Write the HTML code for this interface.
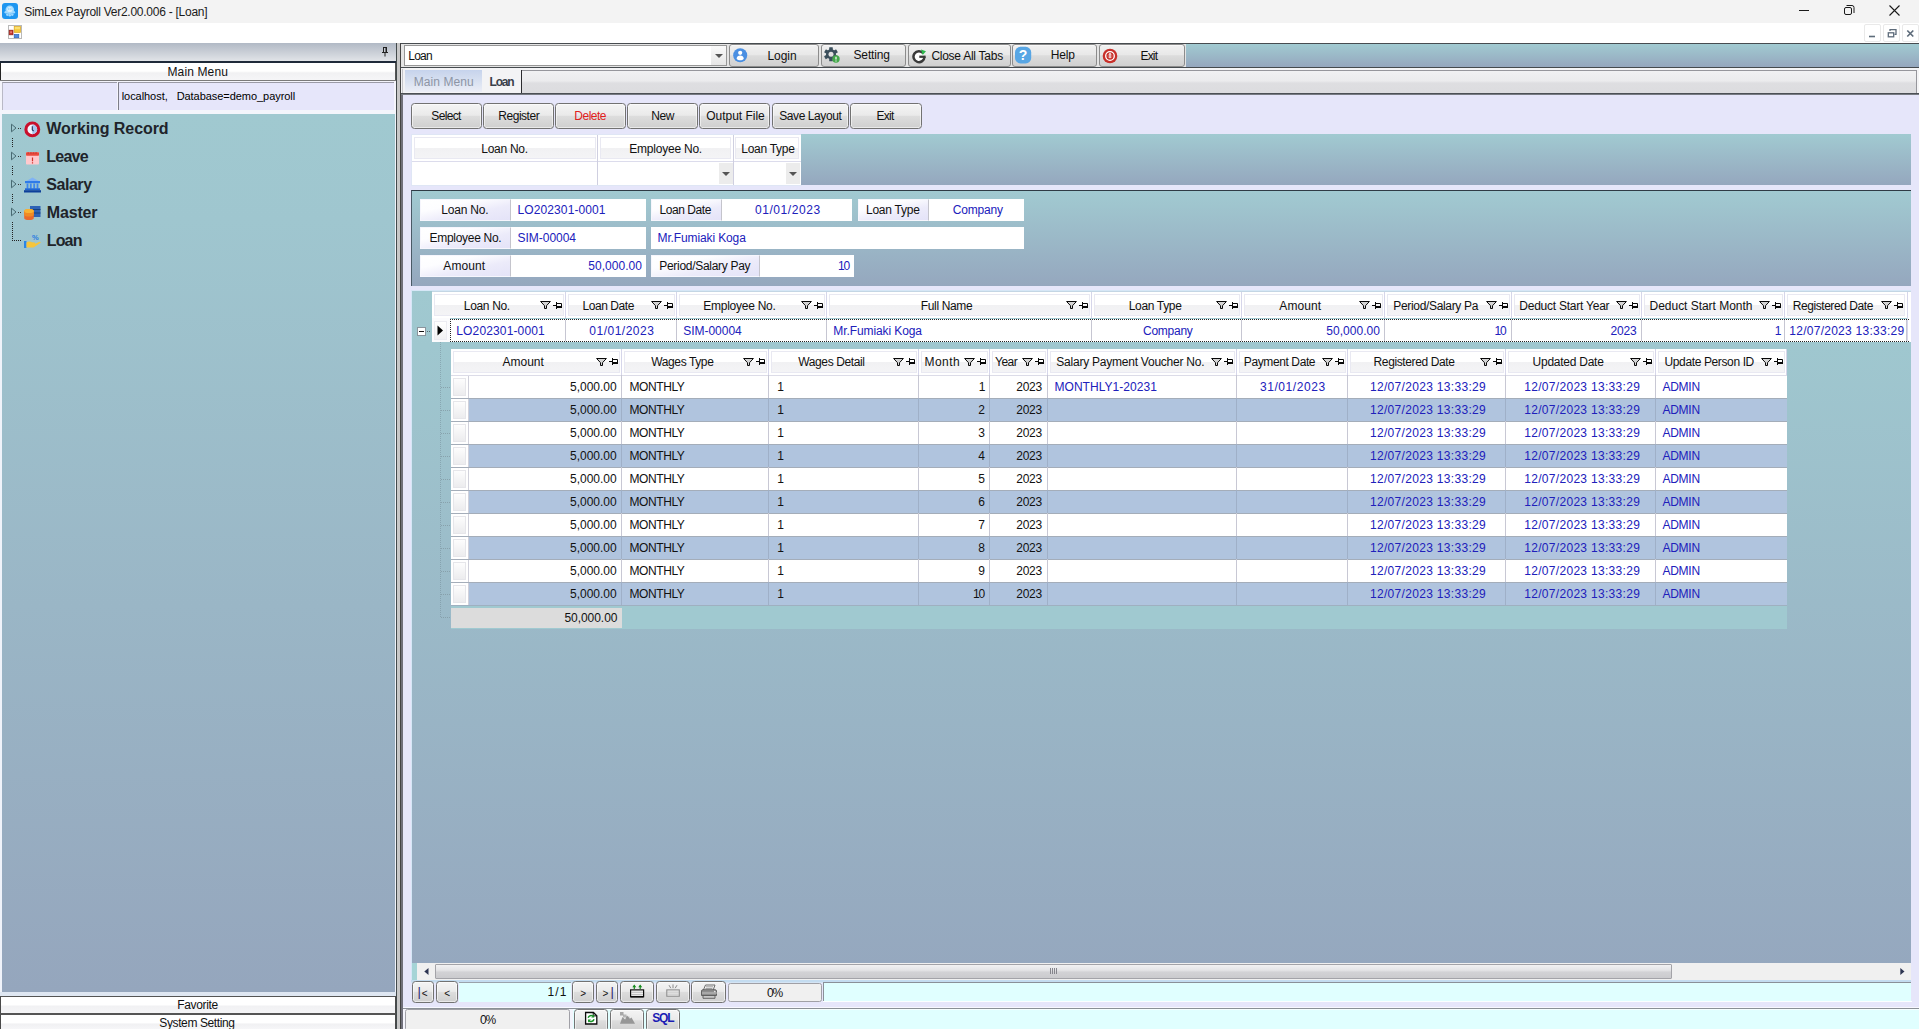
<!DOCTYPE html><html lang="en"><head><meta charset="utf-8"><title>SimLex Payroll Ver2.00.006 - [Loan]</title><style>
*{box-sizing:border-box;margin:0;padding:0}
html,body{width:1919px;height:1029px;overflow:hidden;background:#e6e6fa}
body{position:relative;font-family:"Liberation Sans","DejaVu Sans",sans-serif;font-size:12px;color:#111;line-height:1}
div,span,svg{position:absolute}
.t{white-space:nowrap;font-size:12px;line-height:14px;height:14px}
.c{text-align:center}
.r{text-align:right}
.bl{color:#2020bb}
.grad{background:linear-gradient(#a1cad1,#95a7be)}
.btn{border:1px solid #727272;border-radius:3.500px;background:linear-gradient(#f4f4f4 0%,#eaeaea 47%,#dddddd 51%,#cfcfcf 100%);box-shadow:inset 0 0 0 1px rgba(255,255,255,.55)}
.tbtn{border:1px solid #8c8c8c;border-radius:3px;background:linear-gradient(#f1f1f1 0%,#e8e8e8 47%,#dcdcdc 51%,#d0d0d0 100%);box-shadow:inset 0 1px 0 rgba(255,255,255,.5)}
.btn .t{left:0;right:0;text-align:center}
.hd{background:#fff}
.hd i{position:absolute;left:2px;right:2px;top:2px;bottom:2px;border:1px solid #e9e9f2;background:linear-gradient(#ffffff 0%,#ffffff 50%,#f1f1f3 52%,#f4f4f6 100%)}
.lab{background:linear-gradient(168deg,#ffffff 0%,#fdfdff 30%,#ecebfa 62%,#e4e3f8 100%);border:1px solid #f6f6fd;border-right:1px solid #c4c4cc}
.val{background:#fff}
.cell{background:#fff;border-right:1px solid #c9c9d6}
</style></head><body>
<div style="left:0px;top:0px;width:1919px;height:22.5px;background:#f3f3f3"></div>
<svg style="left:2px;top:3px" width="16" height="16" viewBox="0 0 16 16"><rect x="0" y="0" width="16" height="16" rx="3" fill="#1e96f0"/><g fill="#9fd9ff"><circle cx="7.800" cy="6.800" r="4.300"/><circle cx="3.800" cy="9.300" r="1.300"/><circle cx="11.800" cy="9.300" r="1.300"/><circle cx="5.300" cy="11.600" r="1.300"/><circle cx="7.800" cy="12.200" r="1.300"/><circle cx="10.300" cy="11.600" r="1.300"/></g><circle cx="7.800" cy="6.500" r="2.600" fill="#d4efff"/><circle cx="6.800" cy="6" r=".7" fill="#6cc0f8"/><circle cx="8.900" cy="6" r=".7" fill="#6cc0f8"/></svg>
<div class="t " style="left:24.20px;top:5px;letter-spacing:-0.256px;color:#1b1b1b">SimLex Payroll Ver2.00.006 - [Loan]</div>
<svg style="left:1790px;top:0" width="129" height="23" viewBox="0 0 129 23"><path d="M9 10.5h10" stroke="#1a1a1a" stroke-width="1"/><rect x="54.5" y="7.5" width="7" height="7" rx="1.5" fill="none" stroke="#1a1a1a"/><path d="M56.5 5.5h5.5a2 2 0 0 1 2 2v5.500" fill="none" stroke="#1a1a1a"/><path d="M99.500 5.500l10 10M109.500 5.500l-10 10" stroke="#1a1a1a" stroke-width="1.100"/></svg>
<div style="left:0px;top:23px;width:1919px;height:20px;background:#fff"></div>
<svg style="left:8px;top:25px" width="14" height="14" viewBox="0 0 14 14"><rect x=".5" y=".5" width="13" height="13" fill="#fff" stroke="#b9b9b9"/><rect x="6.200" y="1.600" width="6.200" height="5.800" fill="#f6c83a"/><rect x="6.200" y="1.600" width="6.200" height="2.600" fill="#fbe070"/><rect x="6.200" y="1.600" width="6.200" height="5.800" fill="none" stroke="#d9a520" stroke-width=".7"/><rect x="1.200" y="5.200" width="3.800" height="4.600" fill="#c8342c" stroke="#8e1f18" stroke-width=".7"/><rect x="2.300" y="6.300" width="1.500" height="1.800" fill="#ee8a80"/><rect x="6.200" y="9.500" width="4.600" height="3.200" fill="#4f8ae0" stroke="#2f64b8" stroke-width=".7"/></svg>
<div style="left:1864px;top:24px;width:17px;height:18px;background:#fff;border:1px solid #e9e9e9;border-radius:2px"></div>
<div style="left:1883px;top:24px;width:17px;height:18px;background:#fff;border:1px solid #e9e9e9;border-radius:2px"></div>
<div style="left:1902px;top:24px;width:17px;height:18px;background:#fff;border:1px solid #e9e9e9;border-radius:2px"></div>
<svg style="left:1864px;top:25px" width="55" height="17" viewBox="0 0 55 17"><path d="M5 11.500h6" stroke="#5d6b7a" stroke-width="1.6"/><rect x="24.300" y="7.800" width="5.400" height="4" fill="none" stroke="#5d6b7a" stroke-width="1.300"/><path d="M26 6V4.700h6v4.600h-1.500" fill="none" stroke="#5d6b7a" stroke-width="1.300"/><path d="M43.300 5.500l6 6M49.300 5.500l-6 6" stroke="#5d6b7a" stroke-width="1.700"/></svg>
<div style="left:0px;top:43px;width:396px;height:18px;background:linear-gradient(#b1b9c5,#c9ced6 50%,#e1e4e8)"></div>
<div style="left:0px;top:61px;width:396px;height:2px;background:#1f2a3a"></div>
<svg style="left:380px;top:46px" width="10" height="12" viewBox="0 0 10 12"><path d="M3 1.500h4M3.500 1.500v4.500M6.500 1.500v4.500M6 1.500v4.500M2 6.500h6M5 6.500v4" stroke="#222" stroke-width="1" fill="none"/></svg>
<div style="left:0px;top:63px;width:396px;height:18px;background:linear-gradient(#fff 0%,#fff 45%,#f1f1f3 55%,#f6f6f8 100%);border-left:1px solid #222;border-right:1px solid #555"></div>
<div style="left:0px;top:80px;width:396px;height:1px;background:#7a7a7a"></div>
<div class="t " style="left:167.50px;top:65px;letter-spacing:0.125px;">Main Menu</div>
<div style="left:0px;top:81px;width:396px;height:33px;background:#f4f4fb"></div>
<div style="left:2px;top:82px;width:115px;height:29px;background:#e6e6fa;border-top:1px solid #9a9aa6;border-left:1px solid #b9b9c6"></div>
<div style="left:118px;top:82px;width:276px;height:29px;background:#e6e6fa;border-top:1px solid #9a9aa6;border-left:1px solid #7d7d88"></div>
<div class="t " style="left:121.70px;top:89px;letter-spacing:-0.052px;font-size:11px;white-space:pre;color:#000">localhost,   Database=demo_payroll</div>
<div style="left:0px;top:110px;width:396px;height:4px;background:#f3f5fb"></div>
<div style="left:2px;top:114px;width:393px;height:878px;background:linear-gradient(#a0c9d0 0%,#9fc6cf 12%,#95a6bd 100%)"></div>
<div style="left:0px;top:114px;width:2px;height:878px;background:#f0f3fa"></div>
<div style="left:395px;top:114px;width:1px;height:878px;background:#f0f3fa"></div>
<div style="left:0px;top:992px;width:396px;height:4px;background:#dfe7f2"></div>
<div class="t " style="left:46.30px;top:119px;letter-spacing:-0.077px;font-size:16px;font-weight:bold;line-height:20px;height:20px;color:#20242a">Working Record</div>
<div class="t " style="left:46.30px;top:147px;letter-spacing:-0.775px;font-size:16px;font-weight:bold;line-height:20px;height:20px;color:#20242a">Leave</div>
<div class="t " style="left:46.30px;top:175px;letter-spacing:-0.460px;font-size:16px;font-weight:bold;line-height:20px;height:20px;color:#20242a">Salary</div>
<div class="t " style="left:46.70px;top:203px;letter-spacing:-0.140px;font-size:16px;font-weight:bold;line-height:20px;height:20px;color:#20242a">Master</div>
<div class="t " style="left:46.70px;top:231px;letter-spacing:-0.833px;font-size:16px;font-weight:bold;line-height:20px;height:20px;color:#20242a">Loan</div>
<svg style="left:10px;top:123px" width="12" height="10" viewBox="0 0 12 10"><path d="M1.500 1.200L6 5 1.500 8.800z" fill="none" stroke="#486a72" stroke-width="1"/><path d="M8 5.500h3" stroke="#333" stroke-width="1" stroke-dasharray="1 1"/></svg>
<svg style="left:10px;top:151px" width="12" height="10" viewBox="0 0 12 10"><path d="M1.500 1.200L6 5 1.500 8.800z" fill="none" stroke="#486a72" stroke-width="1"/><path d="M8 5.500h3" stroke="#333" stroke-width="1" stroke-dasharray="1 1"/></svg>
<svg style="left:10px;top:179px" width="12" height="10" viewBox="0 0 12 10"><path d="M1.500 1.200L6 5 1.500 8.800z" fill="none" stroke="#486a72" stroke-width="1"/><path d="M8 5.500h3" stroke="#333" stroke-width="1" stroke-dasharray="1 1"/></svg>
<svg style="left:10px;top:207px" width="12" height="10" viewBox="0 0 12 10"><path d="M1.500 1.200L6 5 1.500 8.800z" fill="none" stroke="#486a72" stroke-width="1"/><path d="M8 5.500h3" stroke="#333" stroke-width="1" stroke-dasharray="1 1"/></svg>
<div style="left:12px;top:138px;width:1px;height:9px;background:repeating-linear-gradient(#222 0 1px,transparent 1px 2px)"></div>
<div style="left:12px;top:166px;width:1px;height:9px;background:repeating-linear-gradient(#222 0 1px,transparent 1px 2px)"></div>
<div style="left:12px;top:194px;width:1px;height:9px;background:repeating-linear-gradient(#222 0 1px,transparent 1px 2px)"></div>
<div style="left:12px;top:222px;width:1px;height:19px;background:repeating-linear-gradient(#222 0 1px,transparent 1px 2px)"></div>
<div style="left:12px;top:240px;width:10px;height:1px;background:repeating-linear-gradient(90deg,#222 0 1px,transparent 1px 2px)"></div>
<svg style="left:24px;top:120.500px" width="17" height="17" viewBox="0 0 17 17"><circle cx="8.300" cy="8.400" r="6.400" fill="#f4f6ff" stroke="#c90f2c" stroke-width="3.100"/><path d="M8.300 3.500a4.900 4.900 0 0 1 0 9.800z" fill="#a9c6ee"/><path d="M8.300 5.200v3.600l1.300 1.200" stroke="#1f2f5a" stroke-width="1.100" fill="none"/></svg>
<svg style="left:26px;top:151.500px" width="13" height="13" viewBox="0 0 13 13"><rect x="0" y=".3" width="13" height="12.200" rx=".8" fill="#ffc9cd"/><rect x="0" y=".3" width="13" height="3.400" rx=".8" fill="#e94a3d"/><path d="M1.500 1h10" stroke="#c0352c" stroke-width="1" stroke-dasharray="1.600 1"/><path d="M6.500 5.600v3.600M6.500 10.200v1.200" stroke="#d2302b" stroke-width="1.200"/></svg>
<svg style="left:24px;top:177px" width="17" height="16" viewBox="0 0 17 16"><path d="M8.500 .5L15.500 4.500H1.500z" fill="#7fb2f5"/><rect x="1" y="4" width="15" height="2.200" fill="#2f7be8"/><path d="M3.500 6.500v5M6.800 6.500v5M10.200 6.500v5M13.500 6.500v5" stroke="#3b86ee" stroke-width="1.800"/><rect x="1" y="11.300" width="15" height="1.800" fill="#1d66d6"/><rect x="0" y="13.200" width="17" height="2.300" fill="#0d3f9a"/></svg>
<svg style="left:24px;top:205px" width="17" height="16" viewBox="0 0 17 16"><rect x="6" y="1" width="10.500" height="11" fill="#2e62b5"/><path d="M6 4.500h10.500M6 8h10.500" stroke="#16407f" stroke-width="1.200"/><ellipse cx="5" cy="6" rx="4.800" ry="2" fill="#f6a623"/><path d="M.2 6v7a4.800 2 0 0 0 9.600 0V6z" fill="#e9692c"/><path d="M.2 6v3.500a4.800 2 0 0 0 9.600 0V6z" fill="#f08a24"/><ellipse cx="5" cy="6" rx="4.800" ry="2" fill="#f8b133"/></svg>
<svg style="left:24px;top:233px" width="17" height="16" viewBox="0 0 17 16"><rect x="0" y="8" width="2.500" height="7" fill="#2a86e8"/><path d="M2.500 9.500c2-1.500 4-1.200 5.500-.3l2.500.3c1 .2 1 1.500 0 1.600l5-2.400c1-.3 1.600.7.800 1.400L9.500 14.500H2.500z" fill="#f7c53b"/><text x="8" y="6.500" font-family="Liberation Sans,sans-serif" font-size="7.500" font-weight="bold" fill="#2a7be0">%</text></svg>
<div style="left:0px;top:996px;width:396px;height:18px;background:linear-gradient(#fff 0%,#fff 45%,#f1f1f3 55%,#f6f6f8 100%);border:1px solid #4a4a4a;border-bottom:none;border-top:1px solid #555"></div>
<div class="t " style="left:177.30px;top:998px;letter-spacing:-0.343px;">Favorite</div>
<div style="left:0px;top:1013px;width:396px;height:16px;background:linear-gradient(#fff 0%,#fff 55%,#f1f1f3 65%,#f6f6f8 100%);border:1px solid #4a4a4a;border-top:2px solid #555;border-bottom:none"></div>
<div class="t " style="left:159.30px;top:1016px;letter-spacing:-0.385px;">System Setting</div>
<div style="left:396px;top:43px;width:1px;height:986px;background:#434a4b"></div>
<div style="left:397px;top:43px;width:3px;height:986px;background:#c8c8c8"></div>
<div style="left:400px;top:43px;width:1px;height:986px;background:#444"></div>
<div style="left:401px;top:43px;width:1518px;height:1px;background:#474c50"></div>
<div class="grad" style="left:401px;top:44px;width:1518px;height:23px;"></div>
<div style="left:401px;top:67px;width:1518px;height:1px;background:#454a4e"></div>
<div style="left:401px;top:44px;width:785px;height:23px;background:#e4e4e4"></div>
<div style="left:404px;top:45px;width:323px;height:21px;background:#fff;border:1px solid #979797"></div>
<div class="t " style="left:408.30px;top:49px;letter-spacing:-0.767px;">Loan</div>
<div style="left:711px;top:46px;width:15px;height:19px;background:linear-gradient(#fafafa,#e6e6e6)"></div>
<svg style="left:715px;top:54px" width="8" height="4" viewBox="0 0 8 4"><path d="M0 0h8L4 4z" fill="#555"/></svg>
<div class="tbtn" style="left:728.5px;top:44px;width:90.5px;height:23px;"></div>
<div class="t " style="left:767.50px;top:49px;letter-spacing:-0.050px;">Login</div>
<div class="tbtn" style="left:821px;top:44px;width:85px;height:23px;"></div>
<div class="t " style="left:853.50px;top:48px;letter-spacing:-0.150px;">Setting</div>
<div class="tbtn" style="left:907.5px;top:44px;width:103.5px;height:23px;"></div>
<div class="t " style="left:931.40px;top:49px;letter-spacing:-0.262px;">Close All Tabs</div>
<div class="tbtn" style="left:1012px;top:44px;width:85px;height:23px;"></div>
<div class="t " style="left:1050.80px;top:48px;letter-spacing:-0.200px;">Help</div>
<div class="tbtn" style="left:1098.5px;top:44px;width:86px;height:23px;"></div>
<div class="t " style="left:1140.40px;top:49px;letter-spacing:-0.767px;">Exit</div>
<svg style="left:733px;top:48px" width="15" height="15" viewBox="0 0 15 15"><circle cx="7.200" cy="7.200" r="7" fill="#4a8fe2"/><circle cx="7.200" cy="4.800" r="2.100" fill="#fff"/><path d="M3.600 10.800c.2-2.600 1.700-3.400 3.600-3.400s3.400.8 3.600 3.400c-.8 1-2.200 1.500-3.600 1.500s-2.800-.5-3.600-1.500z" fill="#fff"/></svg>
<svg style="left:824px;top:47px" width="16" height="16" viewBox="0 0 16 16"><g fill="#3b4f5c"><circle cx="7" cy="7.300" r="5"/><rect x="5.200" y="0.300" width="3.600" height="4" rx=".5" transform="rotate(0 7 7.300)"/><rect x="5.200" y="0.300" width="3.600" height="4" rx=".5" transform="rotate(60 7 7.300)"/><rect x="5.200" y="0.300" width="3.600" height="4" rx=".5" transform="rotate(120 7 7.300)"/><rect x="5.200" y="0.300" width="3.600" height="4" rx=".5" transform="rotate(180 7 7.300)"/><rect x="5.200" y="0.300" width="3.600" height="4" rx=".5" transform="rotate(240 7 7.300)"/><rect x="5.200" y="0.300" width="3.600" height="4" rx=".5" transform="rotate(300 7 7.300)"/></g><circle cx="7" cy="7.300" r="2.500" fill="#e0e0e0"/><circle cx="12" cy="12" r="3.700" fill="#43a84a"/><path d="M12 9.800v2.700M12 13.500v.9" stroke="#fff" stroke-width="1.200"/></svg>
<svg style="left:912px;top:48.500px" width="15" height="15" viewBox="0 0 15 15"><circle cx="7" cy="7.600" r="4.800" fill="#fff"/><path d="M11.300 4.200A5.500 5.500 0 1 0 12.500 7.800" fill="none" stroke="#3a3a3a" stroke-width="2.500"/><path d="M7.300 6.600h6.300v2.300H7.300z" fill="#3a3a3a"/><path d="M9 .6l5 1.700-3.300 3.700z" fill="#2cb84c"/></svg>
<svg style="left:1014px;top:46px" width="18" height="18" viewBox="0 0 18 18"><rect x="1" y=".8" width="16.200" height="16.600" rx="5.500" fill="#58a6e4"/><text x="9" y="14" text-anchor="middle" font-family="Liberation Sans,sans-serif" font-size="14" font-weight="bold" fill="#fff">?</text></svg>
<svg style="left:1102px;top:48px" width="16" height="16" viewBox="0 0 16 16"><circle cx="8" cy="8" r="7.300" fill="#c8302a"/><circle cx="8" cy="8" r="4.300" fill="none" stroke="#fff" stroke-width="1.300"/><path d="M8 5v5" stroke="#fff" stroke-width="1.300"/><circle cx="8" cy="8" r="2" fill="none" stroke="#fff" stroke-width=".6" opacity=".5"/></svg>
<div style="left:401px;top:68px;width:1518px;height:25px;background:#f4f4f6"></div>
<div style="left:522px;top:70px;width:1395px;height:23px;background:linear-gradient(#f1f1f3 0%,#ebebed 45%,#dedee1 55%,#dcdcdf 100%);border:1px solid #96969c;border-left:none;border-bottom:none"></div>
<div style="left:401px;top:93px;width:1518px;height:1px;background:#4c5055"></div>
<div style="left:401px;top:94px;width:1518px;height:1px;background:#777b82"></div>
<div style="left:401px;top:68px;width:4px;height:25px;background:#f1f1f4"></div>
<div style="left:402px;top:69px;width:1px;height:24px;background:#c4c4c8"></div>
<div style="left:405px;top:70px;width:77px;height:22px;background:linear-gradient(#c6d3ec 0%,#d6dff0 45%,#eceef6 100%)"></div>
<div class="t " style="left:413.80px;top:75px;letter-spacing:0.062px;color:#8d95a5">Main Menu</div>
<div style="left:482px;top:70px;width:40px;height:23px;background:#f3f3f5;border-right:1px solid #2c2c30"></div>
<div class="t " style="left:489.50px;top:75px;letter-spacing:-1.167px;font-weight:bold;color:#3a404a">Loan</div>
<div style="left:401px;top:95px;width:1518px;height:886px;background:#e6e6fa"></div>
<div style="left:401px;top:95px;width:2px;height:934px;background:#70707a"></div>
<div class="btn" style="left:411.2px;top:103.2px;width:71px;height:25.6px;"></div>
<div class="t " style="left:431.30px;top:109px;letter-spacing:-0.660px;">Select</div>
<div class="btn" style="left:483.3px;top:103.2px;width:71px;height:25.6px;"></div>
<div class="t " style="left:498.30px;top:109px;letter-spacing:-0.471px;">Register</div>
<div class="btn" style="left:555.3px;top:103.2px;width:71px;height:25.6px;"></div>
<div class="t " style="left:574.30px;top:109px;letter-spacing:-0.500px;color:#e0201c">Delete</div>
<div class="btn" style="left:627.3px;top:103.2px;width:71px;height:25.6px;"></div>
<div class="t " style="left:651.30px;top:109px;letter-spacing:-0.400px;">New</div>
<div class="btn" style="left:699.3px;top:103.2px;width:71.2px;height:25.6px;"></div>
<div class="t " style="left:706.30px;top:109px;letter-spacing:-0.030px;">Output File</div>
<div class="btn" style="left:771.5px;top:103.2px;width:77.5px;height:25.6px;"></div>
<div class="t " style="left:779.30px;top:109px;letter-spacing:-0.430px;">Save Layout</div>
<div class="btn" style="left:850px;top:103.2px;width:71.5px;height:25.6px;"></div>
<div class="t " style="left:876.50px;top:109px;letter-spacing:-0.733px;">Exit</div>
<div style="left:411px;top:134px;width:391px;height:52px;background:#fff;border:1px solid #dfe6f5"></div>
<div class="grad" style="left:801px;top:134px;width:1110px;height:51px;"></div>
<div class="hd" style="left:412px;top:135px;width:186px;height:26px;"><i></i></div>
<div class="t " style="left:481.30px;top:142px;letter-spacing:-0.286px;">Loan No.</div>
<div class="hd" style="left:598px;top:135px;width:135px;height:26px;"><i></i></div>
<div class="t " style="left:629.30px;top:142px;letter-spacing:-0.227px;">Employee No.</div>
<div class="hd" style="left:733px;top:135px;width:68px;height:26px;"><i></i></div>
<div class="t " style="left:741.30px;top:142px;letter-spacing:-0.287px;">Loan Type</div>
<div style="left:412px;top:161px;width:389px;height:1px;background:#dcdcec"></div>
<div style="left:597px;top:135px;width:1px;height:50px;background:#cfcfe0"></div>
<div style="left:733px;top:135px;width:1px;height:50px;background:#cfcfe0"></div>
<div style="left:719px;top:163px;width:14px;height:21px;background:#ececec"></div>
<svg style="left:722px;top:172px" width="8" height="4" viewBox="0 0 8 4"><path d="M0 0h8L4 4z" fill="#555"/></svg>
<div style="left:786px;top:163px;width:14px;height:21px;background:#ececec"></div>
<svg style="left:789px;top:172px" width="8" height="4" viewBox="0 0 8 4"><path d="M0 0h8L4 4z" fill="#555"/></svg>
<div class="grad" style="left:411px;top:190px;width:1500px;height:96px;border-top:1px solid #2f3b45;border-left:1px solid #4a5a66"></div>
<div class="lab" style="left:419.5px;top:199px;width:91px;height:22px;"></div>
<div class="t " style="left:441.30px;top:203px;letter-spacing:-0.214px;">Loan No.</div>
<div class="val" style="left:510.5px;top:199px;width:135.5px;height:22px;"></div>
<div class="t bl" style="left:517.50px;top:203px;letter-spacing:0.108px;">LO202301-0001</div>
<div class="lab" style="left:651px;top:199px;width:70.5px;height:22px;"></div>
<div class="t " style="left:659.50px;top:203px;letter-spacing:-0.438px;">Loan Date</div>
<div class="val" style="left:721.5px;top:199px;width:130.5px;height:22px;"></div>
<div class="t bl" style="left:755.00px;top:203px;letter-spacing:0.556px;">01/01/2023</div>
<div class="lab" style="left:857.5px;top:199px;width:71px;height:22px;"></div>
<div class="t " style="left:866.00px;top:203px;letter-spacing:-0.250px;">Loan Type</div>
<div class="val" style="left:928.5px;top:199px;width:95.5px;height:22px;"></div>
<div class="t bl" style="left:952.70px;top:203px;letter-spacing:-0.167px;">Company</div>
<div class="lab" style="left:419.5px;top:227px;width:91px;height:22px;"></div>
<div class="t " style="left:429.50px;top:231px;letter-spacing:-0.291px;">Employee No.</div>
<div class="val" style="left:510.5px;top:227px;width:135.5px;height:22px;"></div>
<div class="t bl" style="left:517.50px;top:231px;letter-spacing:-0.025px;">SIM-00004</div>
<div class="val" style="left:651px;top:227px;width:373px;height:22px;"></div>
<div class="t bl" style="left:657.50px;top:231px;letter-spacing:-0.121px;">Mr.Fumiaki Koga</div>
<div class="lab" style="left:419.5px;top:255px;width:91px;height:22px;"></div>
<div class="t " style="left:443.30px;top:259px;letter-spacing:0.100px;">Amount</div>
<div class="val" style="left:510.5px;top:255px;width:135.5px;height:22px;"></div>
<div class="t bl" style="left:588.30px;top:259px;letter-spacing:0.025px;">50,000.00</div>
<div class="lab" style="left:651px;top:255px;width:108.5px;height:22px;"></div>
<div class="t " style="left:659.30px;top:259px;letter-spacing:-0.300px;">Period/Salary Pay</div>
<div class="val" style="left:759.5px;top:255px;width:94.5px;height:22px;"></div>
<div class="t bl" style="left:838.00px;top:259px;letter-spacing:-1.200px;">10</div>
<div style="left:411px;top:290px;width:1500px;height:691px;background:#d6e7f6"></div>
<div style="left:412px;top:291px;width:1499px;height:690px;background:linear-gradient(#a0c9d0 0%,#9fc7cf 8%,#95a7be 100%)"></div>
<div style="left:432px;top:291px;width:1479px;height:1px;background:#c4d6e4"></div>
<div style="left:432px;top:292px;width:1479px;height:26px;background:#fff"></div>
<div class="hd" style="left:432px;top:292px;width:134px;height:26px;"><i></i></div>
<div class="t " style="left:463.80px;top:299px;letter-spacing:-0.329px;">Loan No.</div>
<svg style="left:539px;top:301px" width="24" height="10" viewBox="0 0 24 10"><path d="M1.600 .5H11.400L7.500 4.700V7.500H5.500V4.700z" fill="#d4d4d4" stroke="#080808" stroke-width="1" stroke-linejoin="miter"/><path d="M14 4.5h3.500" stroke="#080808" stroke-width="1" fill="none"/><path d="M17.500 1v7" stroke="#080808" stroke-width="1" fill="none"/><path d="M18 2.5h4.500v3.500" stroke="#080808" stroke-width="1" fill="none"/><path d="M18 6h5" stroke="#080808" stroke-width="2" fill="none"/></svg>
<div class="hd" style="left:566px;top:292px;width:111px;height:26px;"><i></i></div>
<div class="t " style="left:582.50px;top:299px;letter-spacing:-0.438px;">Loan Date</div>
<svg style="left:650px;top:301px" width="24" height="10" viewBox="0 0 24 10"><path d="M1.600 .5H11.400L7.500 4.700V7.500H5.500V4.700z" fill="#d4d4d4" stroke="#080808" stroke-width="1" stroke-linejoin="miter"/><path d="M14 4.5h3.500" stroke="#080808" stroke-width="1" fill="none"/><path d="M17.500 1v7" stroke="#080808" stroke-width="1" fill="none"/><path d="M18 2.5h4.500v3.500" stroke="#080808" stroke-width="1" fill="none"/><path d="M18 6h5" stroke="#080808" stroke-width="2" fill="none"/></svg>
<div class="hd" style="left:677px;top:292px;width:150px;height:26px;"><i></i></div>
<div class="t " style="left:703.30px;top:299px;letter-spacing:-0.255px;">Employee No.</div>
<svg style="left:800px;top:301px" width="24" height="10" viewBox="0 0 24 10"><path d="M1.600 .5H11.400L7.500 4.700V7.500H5.500V4.700z" fill="#d4d4d4" stroke="#080808" stroke-width="1" stroke-linejoin="miter"/><path d="M14 4.5h3.500" stroke="#080808" stroke-width="1" fill="none"/><path d="M17.500 1v7" stroke="#080808" stroke-width="1" fill="none"/><path d="M18 2.5h4.500v3.500" stroke="#080808" stroke-width="1" fill="none"/><path d="M18 6h5" stroke="#080808" stroke-width="2" fill="none"/></svg>
<div class="hd" style="left:827px;top:292px;width:265px;height:26px;"><i></i></div>
<div class="t " style="left:920.80px;top:299px;letter-spacing:-0.350px;">Full Name</div>
<svg style="left:1065px;top:301px" width="24" height="10" viewBox="0 0 24 10"><path d="M1.600 .5H11.400L7.500 4.700V7.500H5.500V4.700z" fill="#d4d4d4" stroke="#080808" stroke-width="1" stroke-linejoin="miter"/><path d="M14 4.5h3.500" stroke="#080808" stroke-width="1" fill="none"/><path d="M17.500 1v7" stroke="#080808" stroke-width="1" fill="none"/><path d="M18 2.5h4.500v3.500" stroke="#080808" stroke-width="1" fill="none"/><path d="M18 6h5" stroke="#080808" stroke-width="2" fill="none"/></svg>
<div class="hd" style="left:1092px;top:292px;width:150px;height:26px;"><i></i></div>
<div class="t " style="left:1128.80px;top:299px;letter-spacing:-0.350px;">Loan Type</div>
<svg style="left:1215px;top:301px" width="24" height="10" viewBox="0 0 24 10"><path d="M1.600 .5H11.400L7.500 4.700V7.500H5.500V4.700z" fill="#d4d4d4" stroke="#080808" stroke-width="1" stroke-linejoin="miter"/><path d="M14 4.5h3.500" stroke="#080808" stroke-width="1" fill="none"/><path d="M17.500 1v7" stroke="#080808" stroke-width="1" fill="none"/><path d="M18 2.5h4.500v3.500" stroke="#080808" stroke-width="1" fill="none"/><path d="M18 6h5" stroke="#080808" stroke-width="2" fill="none"/></svg>
<div class="hd" style="left:1242px;top:292px;width:143px;height:26px;"><i></i></div>
<div class="t " style="left:1279.30px;top:299px;letter-spacing:0.100px;">Amount</div>
<svg style="left:1358px;top:301px" width="24" height="10" viewBox="0 0 24 10"><path d="M1.600 .5H11.400L7.500 4.700V7.500H5.500V4.700z" fill="#d4d4d4" stroke="#080808" stroke-width="1" stroke-linejoin="miter"/><path d="M14 4.5h3.500" stroke="#080808" stroke-width="1" fill="none"/><path d="M17.500 1v7" stroke="#080808" stroke-width="1" fill="none"/><path d="M18 2.5h4.500v3.500" stroke="#080808" stroke-width="1" fill="none"/><path d="M18 6h5" stroke="#080808" stroke-width="2" fill="none"/></svg>
<div class="hd" style="left:1385px;top:292px;width:127px;height:26px;"><i></i></div>
<div class="t " style="left:1393.30px;top:299px;letter-spacing:-0.333px;">Period/Salary Pa</div>
<svg style="left:1485px;top:301px" width="24" height="10" viewBox="0 0 24 10"><path d="M1.600 .5H11.400L7.500 4.700V7.500H5.500V4.700z" fill="#d4d4d4" stroke="#080808" stroke-width="1" stroke-linejoin="miter"/><path d="M14 4.5h3.500" stroke="#080808" stroke-width="1" fill="none"/><path d="M17.500 1v7" stroke="#080808" stroke-width="1" fill="none"/><path d="M18 2.5h4.500v3.500" stroke="#080808" stroke-width="1" fill="none"/><path d="M18 6h5" stroke="#080808" stroke-width="2" fill="none"/></svg>
<div class="hd" style="left:1512px;top:292px;width:130px;height:26px;"><i></i></div>
<div class="t " style="left:1519.30px;top:299px;letter-spacing:-0.237px;">Deduct Start Year</div>
<svg style="left:1615px;top:301px" width="24" height="10" viewBox="0 0 24 10"><path d="M1.600 .5H11.400L7.500 4.700V7.500H5.500V4.700z" fill="#d4d4d4" stroke="#080808" stroke-width="1" stroke-linejoin="miter"/><path d="M14 4.5h3.500" stroke="#080808" stroke-width="1" fill="none"/><path d="M17.500 1v7" stroke="#080808" stroke-width="1" fill="none"/><path d="M18 2.5h4.500v3.500" stroke="#080808" stroke-width="1" fill="none"/><path d="M18 6h5" stroke="#080808" stroke-width="2" fill="none"/></svg>
<div class="hd" style="left:1642px;top:292px;width:143px;height:26px;"><i></i></div>
<div class="t " style="left:1649.60px;top:299px;letter-spacing:-0.035px;">Deduct Start Month</div>
<svg style="left:1758px;top:301px" width="24" height="10" viewBox="0 0 24 10"><path d="M1.600 .5H11.400L7.500 4.700V7.500H5.500V4.700z" fill="#d4d4d4" stroke="#080808" stroke-width="1" stroke-linejoin="miter"/><path d="M14 4.5h3.500" stroke="#080808" stroke-width="1" fill="none"/><path d="M17.500 1v7" stroke="#080808" stroke-width="1" fill="none"/><path d="M18 2.5h4.500v3.500" stroke="#080808" stroke-width="1" fill="none"/><path d="M18 6h5" stroke="#080808" stroke-width="2" fill="none"/></svg>
<div class="hd" style="left:1785px;top:292px;width:122px;height:26px;"><i></i></div>
<div class="t " style="left:1792.70px;top:299px;letter-spacing:-0.429px;">Registered Date</div>
<svg style="left:1880px;top:301px" width="24" height="10" viewBox="0 0 24 10"><path d="M1.600 .5H11.400L7.500 4.700V7.500H5.500V4.700z" fill="#d4d4d4" stroke="#080808" stroke-width="1" stroke-linejoin="miter"/><path d="M14 4.5h3.500" stroke="#080808" stroke-width="1" fill="none"/><path d="M17.500 1v7" stroke="#080808" stroke-width="1" fill="none"/><path d="M18 2.5h4.500v3.500" stroke="#080808" stroke-width="1" fill="none"/><path d="M18 6h5" stroke="#080808" stroke-width="2" fill="none"/></svg>
<div style="left:565px;top:292px;width:1px;height:26px;background:#d6d6ea"></div>
<div style="left:676px;top:292px;width:1px;height:26px;background:#d6d6ea"></div>
<div style="left:826px;top:292px;width:1px;height:26px;background:#d6d6ea"></div>
<div style="left:1091px;top:292px;width:1px;height:26px;background:#d6d6ea"></div>
<div style="left:1241px;top:292px;width:1px;height:26px;background:#d6d6ea"></div>
<div style="left:1384px;top:292px;width:1px;height:26px;background:#d6d6ea"></div>
<div style="left:1511px;top:292px;width:1px;height:26px;background:#d6d6ea"></div>
<div style="left:1641px;top:292px;width:1px;height:26px;background:#d6d6ea"></div>
<div style="left:1784px;top:292px;width:1px;height:26px;background:#d6d6ea"></div>
<div style="left:1907px;top:292px;width:4px;height:50px;background:#fff;border-left:1px solid #d6d6ea"></div>
<div style="left:432px;top:318px;width:18px;height:24px;background:#fbfbfd"></div>
<div style="left:434px;top:321px;width:13px;height:19px;background:linear-gradient(#ffffff,#f1f1f3);border:1px solid #ececf2"></div>
<svg style="left:437px;top:325px" width="7" height="11" viewBox="0 0 7 11"><path d="M.5 .5L6 5.500 .5 10.500z" fill="#000"/></svg>
<div style="left:450px;top:320px;width:1457px;height:22px;background:#fff"></div>
<div class="t bl" style="left:456.30px;top:324px;letter-spacing:0.142px;">LO202301-0001</div>
<div style="left:565px;top:320px;width:1px;height:22px;background:#c6c6d2"></div>
<div class="t bl" style="left:589.30px;top:324px;letter-spacing:0.500px;">01/01/2023</div>
<div style="left:676px;top:320px;width:1px;height:22px;background:#c6c6d2"></div>
<div class="t bl" style="left:683.30px;top:324px;letter-spacing:-0.037px;">SIM-00004</div>
<div style="left:826px;top:320px;width:1px;height:22px;background:#c6c6d2"></div>
<div class="t bl" style="left:833.30px;top:324px;letter-spacing:-0.093px;">Mr.Fumiaki Koga</div>
<div style="left:1091px;top:320px;width:1px;height:22px;background:#c6c6d2"></div>
<div class="t bl" style="left:1143.00px;top:324px;letter-spacing:-0.250px;">Company</div>
<div style="left:1241px;top:320px;width:1px;height:22px;background:#c6c6d2"></div>
<div class="t bl" style="left:1326.30px;top:324px;letter-spacing:0.025px;">50,000.00</div>
<div style="left:1384px;top:320px;width:1px;height:22px;background:#c6c6d2"></div>
<div class="t bl" style="left:1494.50px;top:324px;letter-spacing:-1.200px;">10</div>
<div style="left:1511px;top:320px;width:1px;height:22px;background:#c6c6d2"></div>
<div class="t bl" style="left:1610.50px;top:324px;letter-spacing:-0.167px;">2023</div>
<div style="left:1641px;top:320px;width:1px;height:22px;background:#c6c6d2"></div>
<div class="t bl" style="left:1774.80px;top:324px;letter-spacing:0.000px;">1</div>
<div style="left:1784px;top:320px;width:1px;height:22px;background:#c6c6d2"></div>
<div class="t bl" style="left:1789.30px;top:324px;letter-spacing:0.261px;">12/07/2023 13:33:29</div>
<div style="left:1906px;top:320px;width:1px;height:22px;background:#c6c6d2"></div>
<div style="left:450px;top:319px;width:1459px;height:1px;background:repeating-linear-gradient(90deg,#222 0 1px,#fff 1px 2px)"></div>
<div style="left:450px;top:341px;width:1459px;height:1px;background:repeating-linear-gradient(90deg,#222 0 1px,#fff 1px 2px)"></div>
<div style="left:450px;top:319px;width:1px;height:23px;background:repeating-linear-gradient(#222 0 1px,#fff 1px 2px)"></div>
<div style="left:417px;top:327px;width:9px;height:9px;background:#fff;border:1px solid #8a949c"></div>
<div style="left:419px;top:331px;width:5px;height:1px;background:#111"></div>
<div style="left:427px;top:331px;width:4px;height:1px;background:repeating-linear-gradient(90deg,#5a6a74 0 1px,transparent 1px 2px)"></div>
<div style="left:440px;top:342px;width:1px;height:276px;background:repeating-linear-gradient(#6e8590 0 1px,transparent 1px 2px);opacity:.45"></div>
<div style="left:451px;top:349px;width:1336px;height:27px;background:#fff"></div>
<div class="hd" style="left:451px;top:349px;width:171px;height:26px;"><i></i></div>
<div class="t " style="left:502.50px;top:355px;letter-spacing:0.000px;">Amount</div>
<svg style="left:595px;top:358px" width="24" height="10" viewBox="0 0 24 10"><path d="M1.600 .5H11.400L7.500 4.700V7.500H5.500V4.700z" fill="#d4d4d4" stroke="#080808" stroke-width="1" stroke-linejoin="miter"/><path d="M14 3.5h3.500" stroke="#080808" stroke-width="1" fill="none"/><path d="M17.500 0v7" stroke="#080808" stroke-width="1" fill="none"/><path d="M18 1.5h4.500v3.500" stroke="#080808" stroke-width="1" fill="none"/><path d="M18 5h5" stroke="#080808" stroke-width="2" fill="none"/></svg>
<div style="left:621px;top:349px;width:1px;height:26px;background:#d6d6ea"></div>
<div class="hd" style="left:622px;top:349px;width:147px;height:26px;"><i></i></div>
<div class="t " style="left:651.30px;top:355px;letter-spacing:-0.389px;">Wages Type</div>
<svg style="left:742px;top:358px" width="24" height="10" viewBox="0 0 24 10"><path d="M1.600 .5H11.400L7.500 4.700V7.500H5.500V4.700z" fill="#d4d4d4" stroke="#080808" stroke-width="1" stroke-linejoin="miter"/><path d="M14 3.5h3.500" stroke="#080808" stroke-width="1" fill="none"/><path d="M17.500 0v7" stroke="#080808" stroke-width="1" fill="none"/><path d="M18 1.5h4.500v3.500" stroke="#080808" stroke-width="1" fill="none"/><path d="M18 5h5" stroke="#080808" stroke-width="2" fill="none"/></svg>
<div style="left:768px;top:349px;width:1px;height:26px;background:#d6d6ea"></div>
<div class="hd" style="left:769px;top:349px;width:150px;height:26px;"><i></i></div>
<div class="t " style="left:798.30px;top:355px;letter-spacing:-0.391px;">Wages Detail</div>
<svg style="left:892px;top:358px" width="24" height="10" viewBox="0 0 24 10"><path d="M1.600 .5H11.400L7.500 4.700V7.500H5.500V4.700z" fill="#d4d4d4" stroke="#080808" stroke-width="1" stroke-linejoin="miter"/><path d="M14 3.5h3.500" stroke="#080808" stroke-width="1" fill="none"/><path d="M17.500 0v7" stroke="#080808" stroke-width="1" fill="none"/><path d="M18 1.5h4.500v3.500" stroke="#080808" stroke-width="1" fill="none"/><path d="M18 5h5" stroke="#080808" stroke-width="2" fill="none"/></svg>
<div style="left:918px;top:349px;width:1px;height:26px;background:#d6d6ea"></div>
<div class="hd" style="left:919px;top:349px;width:71px;height:26px;"><i></i></div>
<div class="t " style="left:924.50px;top:355px;letter-spacing:0.450px;">Month</div>
<svg style="left:963px;top:358px" width="24" height="10" viewBox="0 0 24 10"><path d="M1.600 .5H11.400L7.500 4.700V7.500H5.500V4.700z" fill="#d4d4d4" stroke="#080808" stroke-width="1" stroke-linejoin="miter"/><path d="M14 3.5h3.500" stroke="#080808" stroke-width="1" fill="none"/><path d="M17.500 0v7" stroke="#080808" stroke-width="1" fill="none"/><path d="M18 1.5h4.500v3.500" stroke="#080808" stroke-width="1" fill="none"/><path d="M18 5h5" stroke="#080808" stroke-width="2" fill="none"/></svg>
<div style="left:989px;top:349px;width:1px;height:26px;background:#d6d6ea"></div>
<div class="hd" style="left:990px;top:349px;width:58px;height:26px;"><i></i></div>
<div class="t " style="left:995.00px;top:355px;letter-spacing:-0.500px;">Year</div>
<svg style="left:1021px;top:358px" width="24" height="10" viewBox="0 0 24 10"><path d="M1.600 .5H11.400L7.500 4.700V7.500H5.500V4.700z" fill="#d4d4d4" stroke="#080808" stroke-width="1" stroke-linejoin="miter"/><path d="M14 3.5h3.500" stroke="#080808" stroke-width="1" fill="none"/><path d="M17.500 0v7" stroke="#080808" stroke-width="1" fill="none"/><path d="M18 1.5h4.500v3.500" stroke="#080808" stroke-width="1" fill="none"/><path d="M18 5h5" stroke="#080808" stroke-width="2" fill="none"/></svg>
<div style="left:1047px;top:349px;width:1px;height:26px;background:#d6d6ea"></div>
<div class="hd" style="left:1048px;top:349px;width:189px;height:26px;"><i></i></div>
<div class="t " style="left:1056.30px;top:355px;letter-spacing:-0.232px;">Salary Payment Voucher No.</div>
<svg style="left:1210px;top:358px" width="24" height="10" viewBox="0 0 24 10"><path d="M1.600 .5H11.400L7.500 4.700V7.500H5.500V4.700z" fill="#d4d4d4" stroke="#080808" stroke-width="1" stroke-linejoin="miter"/><path d="M14 3.5h3.500" stroke="#080808" stroke-width="1" fill="none"/><path d="M17.500 0v7" stroke="#080808" stroke-width="1" fill="none"/><path d="M18 1.5h4.500v3.500" stroke="#080808" stroke-width="1" fill="none"/><path d="M18 5h5" stroke="#080808" stroke-width="2" fill="none"/></svg>
<div style="left:1236px;top:349px;width:1px;height:26px;background:#d6d6ea"></div>
<div class="hd" style="left:1237px;top:349px;width:111px;height:26px;"><i></i></div>
<div class="t " style="left:1243.80px;top:355px;letter-spacing:-0.391px;">Payment Date</div>
<svg style="left:1321px;top:358px" width="24" height="10" viewBox="0 0 24 10"><path d="M1.600 .5H11.400L7.500 4.700V7.500H5.500V4.700z" fill="#d4d4d4" stroke="#080808" stroke-width="1" stroke-linejoin="miter"/><path d="M14 3.5h3.500" stroke="#080808" stroke-width="1" fill="none"/><path d="M17.500 0v7" stroke="#080808" stroke-width="1" fill="none"/><path d="M18 1.5h4.500v3.500" stroke="#080808" stroke-width="1" fill="none"/><path d="M18 5h5" stroke="#080808" stroke-width="2" fill="none"/></svg>
<div style="left:1347px;top:349px;width:1px;height:26px;background:#d6d6ea"></div>
<div class="hd" style="left:1348px;top:349px;width:158px;height:26px;"><i></i></div>
<div class="t " style="left:1373.60px;top:355px;letter-spacing:-0.393px;">Registered Date</div>
<svg style="left:1479px;top:358px" width="24" height="10" viewBox="0 0 24 10"><path d="M1.600 .5H11.400L7.500 4.700V7.500H5.500V4.700z" fill="#d4d4d4" stroke="#080808" stroke-width="1" stroke-linejoin="miter"/><path d="M14 3.5h3.500" stroke="#080808" stroke-width="1" fill="none"/><path d="M17.500 0v7" stroke="#080808" stroke-width="1" fill="none"/><path d="M18 1.5h4.500v3.500" stroke="#080808" stroke-width="1" fill="none"/><path d="M18 5h5" stroke="#080808" stroke-width="2" fill="none"/></svg>
<div style="left:1505px;top:349px;width:1px;height:26px;background:#d6d6ea"></div>
<div class="hd" style="left:1506px;top:349px;width:150px;height:26px;"><i></i></div>
<div class="t " style="left:1532.60px;top:355px;letter-spacing:-0.255px;">Updated Date</div>
<svg style="left:1629px;top:358px" width="24" height="10" viewBox="0 0 24 10"><path d="M1.600 .5H11.400L7.500 4.700V7.500H5.500V4.700z" fill="#d4d4d4" stroke="#080808" stroke-width="1" stroke-linejoin="miter"/><path d="M14 3.5h3.500" stroke="#080808" stroke-width="1" fill="none"/><path d="M17.500 0v7" stroke="#080808" stroke-width="1" fill="none"/><path d="M18 1.5h4.500v3.500" stroke="#080808" stroke-width="1" fill="none"/><path d="M18 5h5" stroke="#080808" stroke-width="2" fill="none"/></svg>
<div style="left:1655px;top:349px;width:1px;height:26px;background:#d6d6ea"></div>
<div class="hd" style="left:1656px;top:349px;width:131px;height:26px;"><i></i></div>
<div class="t " style="left:1664.50px;top:355px;letter-spacing:-0.373px;">Update Person ID</div>
<svg style="left:1760px;top:358px" width="24" height="10" viewBox="0 0 24 10"><path d="M1.600 .5H11.400L7.500 4.700V7.500H5.500V4.700z" fill="#d4d4d4" stroke="#080808" stroke-width="1" stroke-linejoin="miter"/><path d="M14 3.5h3.500" stroke="#080808" stroke-width="1" fill="none"/><path d="M17.500 0v7" stroke="#080808" stroke-width="1" fill="none"/><path d="M18 1.5h4.500v3.500" stroke="#080808" stroke-width="1" fill="none"/><path d="M18 5h5" stroke="#080808" stroke-width="2" fill="none"/></svg>
<div style="left:1786px;top:349px;width:1px;height:26px;background:#d6d6ea"></div>
<div style="left:451px;top:375px;width:1336px;height:23px;background:#fff;border-top:1px solid #dcdce8"></div>
<div style="left:451px;top:376px;width:18px;height:22px;background:#fff;border-right:1px solid #d0d0da"></div>
<div style="left:453px;top:378px;width:13px;height:18px;background:linear-gradient(#fdfdfd,#ececee);border:1px solid #e6e6ea"></div>
<div style="left:621px;top:375px;width:1px;height:23px;background:#c8c8d4"></div>
<div style="left:768px;top:375px;width:1px;height:23px;background:#c8c8d4"></div>
<div style="left:918px;top:375px;width:1px;height:23px;background:#c8c8d4"></div>
<div style="left:989px;top:375px;width:1px;height:23px;background:#c8c8d4"></div>
<div style="left:1047px;top:375px;width:1px;height:23px;background:#c8c8d4"></div>
<div style="left:1236px;top:375px;width:1px;height:23px;background:#c8c8d4"></div>
<div style="left:1347px;top:375px;width:1px;height:23px;background:#c8c8d4"></div>
<div style="left:1505px;top:375px;width:1px;height:23px;background:#c8c8d4"></div>
<div style="left:1655px;top:375px;width:1px;height:23px;background:#c8c8d4"></div>
<div class="t " style="left:570.00px;top:380px;letter-spacing:0.000px;">5,000.00</div>
<div class="t " style="left:629.50px;top:380px;letter-spacing:-0.417px;">MONTHLY</div>
<div class="t " style="left:777.30px;top:380px;letter-spacing:0.000px;">1</div>
<div class="t " style="left:978.80px;top:380px;letter-spacing:0.000px;">1</div>
<div class="t " style="left:1016.30px;top:380px;letter-spacing:-0.267px;">2023</div>
<div class="t bl" style="left:1054.50px;top:380px;letter-spacing:0.038px;">MONTHLY1-20231</div>
<div class="t bl" style="left:1260.00px;top:380px;letter-spacing:0.556px;">31/01/2023</div>
<div class="t bl" style="left:1370.00px;top:380px;letter-spacing:0.311px;">12/07/2023 13:33:29</div>
<div class="t bl" style="left:1524.20px;top:380px;letter-spacing:0.311px;">12/07/2023 13:33:29</div>
<div class="t bl" style="left:1662.50px;top:380px;letter-spacing:-0.275px;">ADMIN</div>
<div style="left:451px;top:398px;width:1336px;height:23px;background:#b0c4de;border-top:1px solid #a4adb9"></div>
<div style="left:451px;top:399px;width:18px;height:22px;background:#fff;border-right:1px solid #d0d0da"></div>
<div style="left:453px;top:401px;width:13px;height:18px;background:linear-gradient(#fdfdfd,#ececee);border:1px solid #e6e6ea"></div>
<div style="left:621px;top:398px;width:1px;height:23px;background:#9fb0c8"></div>
<div style="left:768px;top:398px;width:1px;height:23px;background:#9fb0c8"></div>
<div style="left:918px;top:398px;width:1px;height:23px;background:#9fb0c8"></div>
<div style="left:989px;top:398px;width:1px;height:23px;background:#9fb0c8"></div>
<div style="left:1047px;top:398px;width:1px;height:23px;background:#9fb0c8"></div>
<div style="left:1236px;top:398px;width:1px;height:23px;background:#9fb0c8"></div>
<div style="left:1347px;top:398px;width:1px;height:23px;background:#9fb0c8"></div>
<div style="left:1505px;top:398px;width:1px;height:23px;background:#9fb0c8"></div>
<div style="left:1655px;top:398px;width:1px;height:23px;background:#9fb0c8"></div>
<div class="t " style="left:570.00px;top:403px;letter-spacing:0.000px;">5,000.00</div>
<div class="t " style="left:629.50px;top:403px;letter-spacing:-0.417px;">MONTHLY</div>
<div class="t " style="left:777.30px;top:403px;letter-spacing:0.000px;">1</div>
<div class="t " style="left:978.20px;top:403px;letter-spacing:0.000px;">2</div>
<div class="t " style="left:1016.30px;top:403px;letter-spacing:-0.267px;">2023</div>
<div class="t bl" style="left:1370.00px;top:403px;letter-spacing:0.311px;">12/07/2023 13:33:29</div>
<div class="t bl" style="left:1524.20px;top:403px;letter-spacing:0.311px;">12/07/2023 13:33:29</div>
<div class="t bl" style="left:1662.50px;top:403px;letter-spacing:-0.275px;">ADMIN</div>
<div style="left:451px;top:421px;width:1336px;height:23px;background:#fff;border-top:1px solid #a4adb9"></div>
<div style="left:451px;top:422px;width:18px;height:22px;background:#fff;border-right:1px solid #d0d0da"></div>
<div style="left:453px;top:424px;width:13px;height:18px;background:linear-gradient(#fdfdfd,#ececee);border:1px solid #e6e6ea"></div>
<div style="left:621px;top:421px;width:1px;height:23px;background:#c8c8d4"></div>
<div style="left:768px;top:421px;width:1px;height:23px;background:#c8c8d4"></div>
<div style="left:918px;top:421px;width:1px;height:23px;background:#c8c8d4"></div>
<div style="left:989px;top:421px;width:1px;height:23px;background:#c8c8d4"></div>
<div style="left:1047px;top:421px;width:1px;height:23px;background:#c8c8d4"></div>
<div style="left:1236px;top:421px;width:1px;height:23px;background:#c8c8d4"></div>
<div style="left:1347px;top:421px;width:1px;height:23px;background:#c8c8d4"></div>
<div style="left:1505px;top:421px;width:1px;height:23px;background:#c8c8d4"></div>
<div style="left:1655px;top:421px;width:1px;height:23px;background:#c8c8d4"></div>
<div class="t " style="left:570.00px;top:426px;letter-spacing:0.000px;">5,000.00</div>
<div class="t " style="left:629.50px;top:426px;letter-spacing:-0.417px;">MONTHLY</div>
<div class="t " style="left:777.30px;top:426px;letter-spacing:0.000px;">1</div>
<div class="t " style="left:978.20px;top:426px;letter-spacing:0.000px;">3</div>
<div class="t " style="left:1016.30px;top:426px;letter-spacing:-0.267px;">2023</div>
<div class="t bl" style="left:1370.00px;top:426px;letter-spacing:0.311px;">12/07/2023 13:33:29</div>
<div class="t bl" style="left:1524.20px;top:426px;letter-spacing:0.311px;">12/07/2023 13:33:29</div>
<div class="t bl" style="left:1662.50px;top:426px;letter-spacing:-0.275px;">ADMIN</div>
<div style="left:451px;top:444px;width:1336px;height:23px;background:#b0c4de;border-top:1px solid #a4adb9"></div>
<div style="left:451px;top:445px;width:18px;height:22px;background:#fff;border-right:1px solid #d0d0da"></div>
<div style="left:453px;top:447px;width:13px;height:18px;background:linear-gradient(#fdfdfd,#ececee);border:1px solid #e6e6ea"></div>
<div style="left:621px;top:444px;width:1px;height:23px;background:#9fb0c8"></div>
<div style="left:768px;top:444px;width:1px;height:23px;background:#9fb0c8"></div>
<div style="left:918px;top:444px;width:1px;height:23px;background:#9fb0c8"></div>
<div style="left:989px;top:444px;width:1px;height:23px;background:#9fb0c8"></div>
<div style="left:1047px;top:444px;width:1px;height:23px;background:#9fb0c8"></div>
<div style="left:1236px;top:444px;width:1px;height:23px;background:#9fb0c8"></div>
<div style="left:1347px;top:444px;width:1px;height:23px;background:#9fb0c8"></div>
<div style="left:1505px;top:444px;width:1px;height:23px;background:#9fb0c8"></div>
<div style="left:1655px;top:444px;width:1px;height:23px;background:#9fb0c8"></div>
<div class="t " style="left:570.00px;top:449px;letter-spacing:0.000px;">5,000.00</div>
<div class="t " style="left:629.50px;top:449px;letter-spacing:-0.417px;">MONTHLY</div>
<div class="t " style="left:777.30px;top:449px;letter-spacing:0.000px;">1</div>
<div class="t " style="left:978.20px;top:449px;letter-spacing:0.000px;">4</div>
<div class="t " style="left:1016.30px;top:449px;letter-spacing:-0.267px;">2023</div>
<div class="t bl" style="left:1370.00px;top:449px;letter-spacing:0.311px;">12/07/2023 13:33:29</div>
<div class="t bl" style="left:1524.20px;top:449px;letter-spacing:0.311px;">12/07/2023 13:33:29</div>
<div class="t bl" style="left:1662.50px;top:449px;letter-spacing:-0.275px;">ADMIN</div>
<div style="left:451px;top:467px;width:1336px;height:23px;background:#fff;border-top:1px solid #a4adb9"></div>
<div style="left:451px;top:468px;width:18px;height:22px;background:#fff;border-right:1px solid #d0d0da"></div>
<div style="left:453px;top:470px;width:13px;height:18px;background:linear-gradient(#fdfdfd,#ececee);border:1px solid #e6e6ea"></div>
<div style="left:621px;top:467px;width:1px;height:23px;background:#c8c8d4"></div>
<div style="left:768px;top:467px;width:1px;height:23px;background:#c8c8d4"></div>
<div style="left:918px;top:467px;width:1px;height:23px;background:#c8c8d4"></div>
<div style="left:989px;top:467px;width:1px;height:23px;background:#c8c8d4"></div>
<div style="left:1047px;top:467px;width:1px;height:23px;background:#c8c8d4"></div>
<div style="left:1236px;top:467px;width:1px;height:23px;background:#c8c8d4"></div>
<div style="left:1347px;top:467px;width:1px;height:23px;background:#c8c8d4"></div>
<div style="left:1505px;top:467px;width:1px;height:23px;background:#c8c8d4"></div>
<div style="left:1655px;top:467px;width:1px;height:23px;background:#c8c8d4"></div>
<div class="t " style="left:570.00px;top:472px;letter-spacing:0.000px;">5,000.00</div>
<div class="t " style="left:629.50px;top:472px;letter-spacing:-0.417px;">MONTHLY</div>
<div class="t " style="left:777.30px;top:472px;letter-spacing:0.000px;">1</div>
<div class="t " style="left:978.20px;top:472px;letter-spacing:0.000px;">5</div>
<div class="t " style="left:1016.30px;top:472px;letter-spacing:-0.267px;">2023</div>
<div class="t bl" style="left:1370.00px;top:472px;letter-spacing:0.311px;">12/07/2023 13:33:29</div>
<div class="t bl" style="left:1524.20px;top:472px;letter-spacing:0.311px;">12/07/2023 13:33:29</div>
<div class="t bl" style="left:1662.50px;top:472px;letter-spacing:-0.275px;">ADMIN</div>
<div style="left:451px;top:490px;width:1336px;height:23px;background:#b0c4de;border-top:1px solid #a4adb9"></div>
<div style="left:451px;top:491px;width:18px;height:22px;background:#fff;border-right:1px solid #d0d0da"></div>
<div style="left:453px;top:493px;width:13px;height:18px;background:linear-gradient(#fdfdfd,#ececee);border:1px solid #e6e6ea"></div>
<div style="left:621px;top:490px;width:1px;height:23px;background:#9fb0c8"></div>
<div style="left:768px;top:490px;width:1px;height:23px;background:#9fb0c8"></div>
<div style="left:918px;top:490px;width:1px;height:23px;background:#9fb0c8"></div>
<div style="left:989px;top:490px;width:1px;height:23px;background:#9fb0c8"></div>
<div style="left:1047px;top:490px;width:1px;height:23px;background:#9fb0c8"></div>
<div style="left:1236px;top:490px;width:1px;height:23px;background:#9fb0c8"></div>
<div style="left:1347px;top:490px;width:1px;height:23px;background:#9fb0c8"></div>
<div style="left:1505px;top:490px;width:1px;height:23px;background:#9fb0c8"></div>
<div style="left:1655px;top:490px;width:1px;height:23px;background:#9fb0c8"></div>
<div class="t " style="left:570.00px;top:495px;letter-spacing:0.000px;">5,000.00</div>
<div class="t " style="left:629.50px;top:495px;letter-spacing:-0.417px;">MONTHLY</div>
<div class="t " style="left:777.30px;top:495px;letter-spacing:0.000px;">1</div>
<div class="t " style="left:978.20px;top:495px;letter-spacing:0.000px;">6</div>
<div class="t " style="left:1016.30px;top:495px;letter-spacing:-0.267px;">2023</div>
<div class="t bl" style="left:1370.00px;top:495px;letter-spacing:0.311px;">12/07/2023 13:33:29</div>
<div class="t bl" style="left:1524.20px;top:495px;letter-spacing:0.311px;">12/07/2023 13:33:29</div>
<div class="t bl" style="left:1662.50px;top:495px;letter-spacing:-0.275px;">ADMIN</div>
<div style="left:451px;top:513px;width:1336px;height:23px;background:#fff;border-top:1px solid #a4adb9"></div>
<div style="left:451px;top:514px;width:18px;height:22px;background:#fff;border-right:1px solid #d0d0da"></div>
<div style="left:453px;top:516px;width:13px;height:18px;background:linear-gradient(#fdfdfd,#ececee);border:1px solid #e6e6ea"></div>
<div style="left:621px;top:513px;width:1px;height:23px;background:#c8c8d4"></div>
<div style="left:768px;top:513px;width:1px;height:23px;background:#c8c8d4"></div>
<div style="left:918px;top:513px;width:1px;height:23px;background:#c8c8d4"></div>
<div style="left:989px;top:513px;width:1px;height:23px;background:#c8c8d4"></div>
<div style="left:1047px;top:513px;width:1px;height:23px;background:#c8c8d4"></div>
<div style="left:1236px;top:513px;width:1px;height:23px;background:#c8c8d4"></div>
<div style="left:1347px;top:513px;width:1px;height:23px;background:#c8c8d4"></div>
<div style="left:1505px;top:513px;width:1px;height:23px;background:#c8c8d4"></div>
<div style="left:1655px;top:513px;width:1px;height:23px;background:#c8c8d4"></div>
<div class="t " style="left:570.00px;top:518px;letter-spacing:0.000px;">5,000.00</div>
<div class="t " style="left:629.50px;top:518px;letter-spacing:-0.417px;">MONTHLY</div>
<div class="t " style="left:777.30px;top:518px;letter-spacing:0.000px;">1</div>
<div class="t " style="left:978.20px;top:518px;letter-spacing:0.000px;">7</div>
<div class="t " style="left:1016.30px;top:518px;letter-spacing:-0.267px;">2023</div>
<div class="t bl" style="left:1370.00px;top:518px;letter-spacing:0.311px;">12/07/2023 13:33:29</div>
<div class="t bl" style="left:1524.20px;top:518px;letter-spacing:0.311px;">12/07/2023 13:33:29</div>
<div class="t bl" style="left:1662.50px;top:518px;letter-spacing:-0.275px;">ADMIN</div>
<div style="left:451px;top:536px;width:1336px;height:23px;background:#b0c4de;border-top:1px solid #a4adb9"></div>
<div style="left:451px;top:537px;width:18px;height:22px;background:#fff;border-right:1px solid #d0d0da"></div>
<div style="left:453px;top:539px;width:13px;height:18px;background:linear-gradient(#fdfdfd,#ececee);border:1px solid #e6e6ea"></div>
<div style="left:621px;top:536px;width:1px;height:23px;background:#9fb0c8"></div>
<div style="left:768px;top:536px;width:1px;height:23px;background:#9fb0c8"></div>
<div style="left:918px;top:536px;width:1px;height:23px;background:#9fb0c8"></div>
<div style="left:989px;top:536px;width:1px;height:23px;background:#9fb0c8"></div>
<div style="left:1047px;top:536px;width:1px;height:23px;background:#9fb0c8"></div>
<div style="left:1236px;top:536px;width:1px;height:23px;background:#9fb0c8"></div>
<div style="left:1347px;top:536px;width:1px;height:23px;background:#9fb0c8"></div>
<div style="left:1505px;top:536px;width:1px;height:23px;background:#9fb0c8"></div>
<div style="left:1655px;top:536px;width:1px;height:23px;background:#9fb0c8"></div>
<div class="t " style="left:570.00px;top:541px;letter-spacing:0.000px;">5,000.00</div>
<div class="t " style="left:629.50px;top:541px;letter-spacing:-0.417px;">MONTHLY</div>
<div class="t " style="left:777.30px;top:541px;letter-spacing:0.000px;">1</div>
<div class="t " style="left:978.20px;top:541px;letter-spacing:0.000px;">8</div>
<div class="t " style="left:1016.30px;top:541px;letter-spacing:-0.267px;">2023</div>
<div class="t bl" style="left:1370.00px;top:541px;letter-spacing:0.311px;">12/07/2023 13:33:29</div>
<div class="t bl" style="left:1524.20px;top:541px;letter-spacing:0.311px;">12/07/2023 13:33:29</div>
<div class="t bl" style="left:1662.50px;top:541px;letter-spacing:-0.275px;">ADMIN</div>
<div style="left:451px;top:559px;width:1336px;height:23px;background:#fff;border-top:1px solid #a4adb9"></div>
<div style="left:451px;top:560px;width:18px;height:22px;background:#fff;border-right:1px solid #d0d0da"></div>
<div style="left:453px;top:562px;width:13px;height:18px;background:linear-gradient(#fdfdfd,#ececee);border:1px solid #e6e6ea"></div>
<div style="left:621px;top:559px;width:1px;height:23px;background:#c8c8d4"></div>
<div style="left:768px;top:559px;width:1px;height:23px;background:#c8c8d4"></div>
<div style="left:918px;top:559px;width:1px;height:23px;background:#c8c8d4"></div>
<div style="left:989px;top:559px;width:1px;height:23px;background:#c8c8d4"></div>
<div style="left:1047px;top:559px;width:1px;height:23px;background:#c8c8d4"></div>
<div style="left:1236px;top:559px;width:1px;height:23px;background:#c8c8d4"></div>
<div style="left:1347px;top:559px;width:1px;height:23px;background:#c8c8d4"></div>
<div style="left:1505px;top:559px;width:1px;height:23px;background:#c8c8d4"></div>
<div style="left:1655px;top:559px;width:1px;height:23px;background:#c8c8d4"></div>
<div class="t " style="left:570.00px;top:564px;letter-spacing:0.000px;">5,000.00</div>
<div class="t " style="left:629.50px;top:564px;letter-spacing:-0.417px;">MONTHLY</div>
<div class="t " style="left:777.30px;top:564px;letter-spacing:0.000px;">1</div>
<div class="t " style="left:978.20px;top:564px;letter-spacing:0.000px;">9</div>
<div class="t " style="left:1016.30px;top:564px;letter-spacing:-0.267px;">2023</div>
<div class="t bl" style="left:1370.00px;top:564px;letter-spacing:0.311px;">12/07/2023 13:33:29</div>
<div class="t bl" style="left:1524.20px;top:564px;letter-spacing:0.311px;">12/07/2023 13:33:29</div>
<div class="t bl" style="left:1662.50px;top:564px;letter-spacing:-0.275px;">ADMIN</div>
<div style="left:451px;top:582px;width:1336px;height:23px;background:#b0c4de;border-top:1px solid #a4adb9"></div>
<div style="left:451px;top:583px;width:18px;height:22px;background:#fff;border-right:1px solid #d0d0da"></div>
<div style="left:453px;top:585px;width:13px;height:18px;background:linear-gradient(#fdfdfd,#ececee);border:1px solid #e6e6ea"></div>
<div style="left:621px;top:582px;width:1px;height:23px;background:#9fb0c8"></div>
<div style="left:768px;top:582px;width:1px;height:23px;background:#9fb0c8"></div>
<div style="left:918px;top:582px;width:1px;height:23px;background:#9fb0c8"></div>
<div style="left:989px;top:582px;width:1px;height:23px;background:#9fb0c8"></div>
<div style="left:1047px;top:582px;width:1px;height:23px;background:#9fb0c8"></div>
<div style="left:1236px;top:582px;width:1px;height:23px;background:#9fb0c8"></div>
<div style="left:1347px;top:582px;width:1px;height:23px;background:#9fb0c8"></div>
<div style="left:1505px;top:582px;width:1px;height:23px;background:#9fb0c8"></div>
<div style="left:1655px;top:582px;width:1px;height:23px;background:#9fb0c8"></div>
<div class="t " style="left:570.00px;top:587px;letter-spacing:0.000px;">5,000.00</div>
<div class="t " style="left:629.50px;top:587px;letter-spacing:-0.417px;">MONTHLY</div>
<div class="t " style="left:777.30px;top:587px;letter-spacing:0.000px;">1</div>
<div class="t " style="left:973.10px;top:587px;letter-spacing:-1.200px;">10</div>
<div class="t " style="left:1016.30px;top:587px;letter-spacing:-0.267px;">2023</div>
<div class="t bl" style="left:1370.00px;top:587px;letter-spacing:0.311px;">12/07/2023 13:33:29</div>
<div class="t bl" style="left:1524.20px;top:587px;letter-spacing:0.311px;">12/07/2023 13:33:29</div>
<div class="t bl" style="left:1662.50px;top:587px;letter-spacing:-0.275px;">ADMIN</div>
<div style="left:451px;top:605px;width:1336px;height:23.5px;background:#a0c9d0;border-top:1px solid #9fb0c0"></div>
<div style="left:451px;top:608px;width:171px;height:20px;background:#dcdcdc"></div>
<div class="t " style="left:564.40px;top:611px;letter-spacing:-0.037px;">50,000.00</div>
<div style="left:441px;top:387px;width:9px;height:1px;background:repeating-linear-gradient(90deg,#7e949e 0 1px,transparent 1px 2px);opacity:.7"></div>
<div style="left:441px;top:410px;width:9px;height:1px;background:repeating-linear-gradient(90deg,#7e949e 0 1px,transparent 1px 2px);opacity:.7"></div>
<div style="left:441px;top:433px;width:9px;height:1px;background:repeating-linear-gradient(90deg,#7e949e 0 1px,transparent 1px 2px);opacity:.7"></div>
<div style="left:441px;top:456px;width:9px;height:1px;background:repeating-linear-gradient(90deg,#7e949e 0 1px,transparent 1px 2px);opacity:.7"></div>
<div style="left:441px;top:479px;width:9px;height:1px;background:repeating-linear-gradient(90deg,#7e949e 0 1px,transparent 1px 2px);opacity:.7"></div>
<div style="left:441px;top:502px;width:9px;height:1px;background:repeating-linear-gradient(90deg,#7e949e 0 1px,transparent 1px 2px);opacity:.7"></div>
<div style="left:441px;top:525px;width:9px;height:1px;background:repeating-linear-gradient(90deg,#7e949e 0 1px,transparent 1px 2px);opacity:.7"></div>
<div style="left:441px;top:548px;width:9px;height:1px;background:repeating-linear-gradient(90deg,#7e949e 0 1px,transparent 1px 2px);opacity:.7"></div>
<div style="left:441px;top:571px;width:9px;height:1px;background:repeating-linear-gradient(90deg,#7e949e 0 1px,transparent 1px 2px);opacity:.7"></div>
<div style="left:441px;top:594px;width:9px;height:1px;background:repeating-linear-gradient(90deg,#7e949e 0 1px,transparent 1px 2px);opacity:.7"></div>
<div style="left:441px;top:617px;width:9px;height:1px;background:repeating-linear-gradient(90deg,#7e949e 0 1px,transparent 1px 2px);opacity:.7"></div>
<div style="left:412px;top:963px;width:5px;height:17px;background:#a5d4d6"></div>
<div style="left:417px;top:963px;width:1494px;height:17px;background:#f0f0f0"></div>
<div style="left:435px;top:964px;width:1237px;height:15px;background:linear-gradient(#f2f2f3 0%,#e4e4e6 40%,#d2d2d5 55%,#cbcbce 100%);border:1px solid #a3a3a8;border-radius:1px"></div>
<svg style="left:424px;top:968px" width="5" height="7" viewBox="0 0 5 7"><path d="M4.500 0v7L.3 3.500z" fill="#2d3552"/></svg>
<svg style="left:1900px;top:968px" width="5" height="7" viewBox="0 0 5 7"><path d="M.3 0v7L4.500 3.500z" fill="#2d3552"/></svg>
<div style="left:1050px;top:968px;width:8px;height:6px;background:repeating-linear-gradient(90deg,#85858c 0 1px,transparent 1px 2px)"></div>
<div style="left:411px;top:980px;width:1500px;height:2px;background:#c4dcf0"></div>
<div style="left:403px;top:982px;width:1516px;height:26px;background:#e6e6fa"></div>
<div style="left:411px;top:982px;width:1500px;height:1px;background:#d4e4f4"></div>
<div style="left:459px;top:982px;width:112px;height:20px;background:#e0ffff;border-top:1px solid #9aa2aa"></div>
<div style="left:823px;top:982px;width:1088px;height:20px;background:#e0ffff;border-top:1px solid #8a9098;border-left:1px solid #8a9098"></div>
<div style="left:823px;top:1001px;width:1089px;height:1px;background:#fbffff"></div>
<div style="left:403px;top:1007px;width:1516px;height:1px;background:#f8f8ff"></div>
<div class="btn" style="left:411.5px;top:981.3px;width:22.5px;height:21.5px;"></div>
<div class="btn" style="left:435.5px;top:981.3px;width:22.5px;height:21.5px;"></div>
<div class="btn" style="left:571.5px;top:981.3px;width:22.5px;height:21.5px;"></div>
<div class="btn" style="left:595.5px;top:981.3px;width:22.5px;height:21.5px;"></div>
<div class="t " style="left:417.60px;top:985px;letter-spacing:0.000px;font-size:13px;color:#2a2470">|</div>
<div class="t " style="left:421.80px;top:987px;letter-spacing:0.000px;font-size:10px;">&lt;</div>
<div class="t " style="left:444.30px;top:987px;letter-spacing:0.000px;font-size:10px;">&lt;</div>
<div class="t " style="left:580.20px;top:987px;letter-spacing:0.000px;font-size:10px;">&gt;</div>
<div class="t " style="left:602.60px;top:987px;letter-spacing:0.000px;font-size:10px;">&gt;</div>
<div class="t " style="left:610.40px;top:985px;letter-spacing:0.000px;font-size:13px;color:#2a2470">|</div>
<div class="t " style="left:547.50px;top:985px;letter-spacing:-1.125px;">1 / 1</div>
<div class="btn" style="left:619.6px;top:981.3px;width:34.6px;height:21.5px;"></div>
<div class="btn" style="left:655.5px;top:981.3px;width:34.6px;height:21.5px;"></div>
<div class="btn" style="left:691.4px;top:981.3px;width:34.6px;height:21.5px;"></div>
<svg style="left:629px;top:984px" width="17" height="15" viewBox="0 0 17 15"><rect x="1.600" y="5.900" width="13" height="6.800" fill="#fff" stroke="#0a0a0a" stroke-width="1.200"/><path d="M2 8.200h12M2 10.300h12" stroke="#9a9a9a" stroke-width=".8"/><path d="M1.600 12.700h13" stroke="#0a0a0a" stroke-width="1.600"/><path d="M5.300 5V1.500M11.200 5V1.500" stroke="#168a1c" stroke-width="1.200"/><path d="M3.300 3.300L5.300 .6l2 2.700zM9.200 3.300l2-2.700 2 2.700z" fill="#168a1c"/></svg>
<svg style="left:665px;top:984px" width="17" height="15" viewBox="0 0 17 15"><rect x="1.800" y="5.900" width="12.500" height="6.300" fill="#f2f2f2" stroke="#8c8c8c" stroke-width="1.100"/><path d="M2 8.100h12M2 10.100h12" stroke="#b4b4b4" stroke-width=".8"/><path d="M4 1.200l1.800 3M8 .4v3.800M12 1.200l-1.800 3" stroke="#8a8a8a" stroke-width="1"/></svg>
<svg style="left:700px;top:984px" width="19" height="16" viewBox="0 0 19 16"><path d="M5.500 1h9.500l-2 5.500H3.200z" fill="#f4f4f4" stroke="#6a6a6a" stroke-width="1"/><path d="M6 2.800h7M5.400 4.500h7" stroke="#8a8a8a" stroke-width=".8"/><path d="M1.500 7c0-.8.600-1.300 1.400-1.300h12.200c.8 0 1.400.5 1.400 1.300v4.500H1.500z" fill="#8e8e8e" stroke="#5a5a5a" stroke-width=".9"/><path d="M3 11.500h12v2.800H3z" fill="#c8c8c8" stroke="#5a5a5a" stroke-width=".9"/><path d="M2 9h15" stroke="#d0d0d0" stroke-width=".8"/><circle cx="14.800" cy="7.500" r=".8" fill="#e8e8e8"/></svg>
<div style="left:727.8px;top:983px;width:94.5px;height:18.6px;background:#f0f0f0;border:1px solid #a0a0a6;border-radius:2.500px"></div>
<div class="t " style="left:767.00px;top:986px;letter-spacing:-1.200px;">0%</div>
<div style="left:403px;top:1008px;width:1516px;height:1px;background:#8a9096"></div>
<div style="left:403px;top:1009px;width:1516px;height:20px;background:#e0ffff"></div>
<div style="left:403px;top:1009px;width:1516px;height:1px;background:#f6ffff"></div>
<div style="left:403px;top:1009px;width:170px;height:20px;background:#f4f4fc"></div>
<div style="left:405.4px;top:1009.4px;width:165px;height:22px;background:#f0f0f0;border:1px solid #a0a0a6;border-radius:2.500px"></div>
<div class="t " style="left:480.00px;top:1013px;letter-spacing:-1.200px;">0%</div>
<div class="btn" style="left:574px;top:1008.6px;width:34.2px;height:23px;"></div>
<div class="btn" style="left:610px;top:1008.6px;width:34.2px;height:23px;"></div>
<div class="btn" style="left:646px;top:1008.6px;width:34.2px;height:23px;"></div>
<svg style="left:584px;top:1011px" width="15" height="14" viewBox="0 0 15 14"><path d="M1.600 1.500h7.800l3.400 3.200v8.300H1.600z" fill="#fff" stroke="#0a0a0a" stroke-width="1.300"/><path d="M9.200 1.500v3.400h3.600" fill="none" stroke="#0a0a0a" stroke-width="1"/><path d="M4.200 6.800a3 3 0 0 1 4.800-1.600M10 8.200a3 3 0 0 1-4.800 1.600" fill="none" stroke="#1a9428" stroke-width="1.500"/><path d="M10.200 3.600v3h-3zM4 11.400v-3h3z" fill="#1a9428"/></svg>
<svg style="left:618px;top:1011px" width="18" height="14" viewBox="0 0 18 14"><g fill="#8f8f8f"><path d="M2 12.800L4.500 6l2.600 2.500L9 4.500l2.800 3.300 1.700-1.300 3.500 6.300z" opacity=".9"/><rect x="2" y="1" width="3.500" height="3.500" opacity=".75"/><rect x="5" y="3.500" width="3.500" height="3" opacity=".6"/><rect x="8.500" y="5.500" width="3" height="3" opacity=".5"/></g></svg>
<div class="t " style="left:652.20px;top:1011px;letter-spacing:-1.200px;font-weight:bold;color:#1c1cb4">SQL</div>
<div style="left:1911px;top:95px;width:8px;height:886px;background:#e6e6fa"></div>
</body></html>
